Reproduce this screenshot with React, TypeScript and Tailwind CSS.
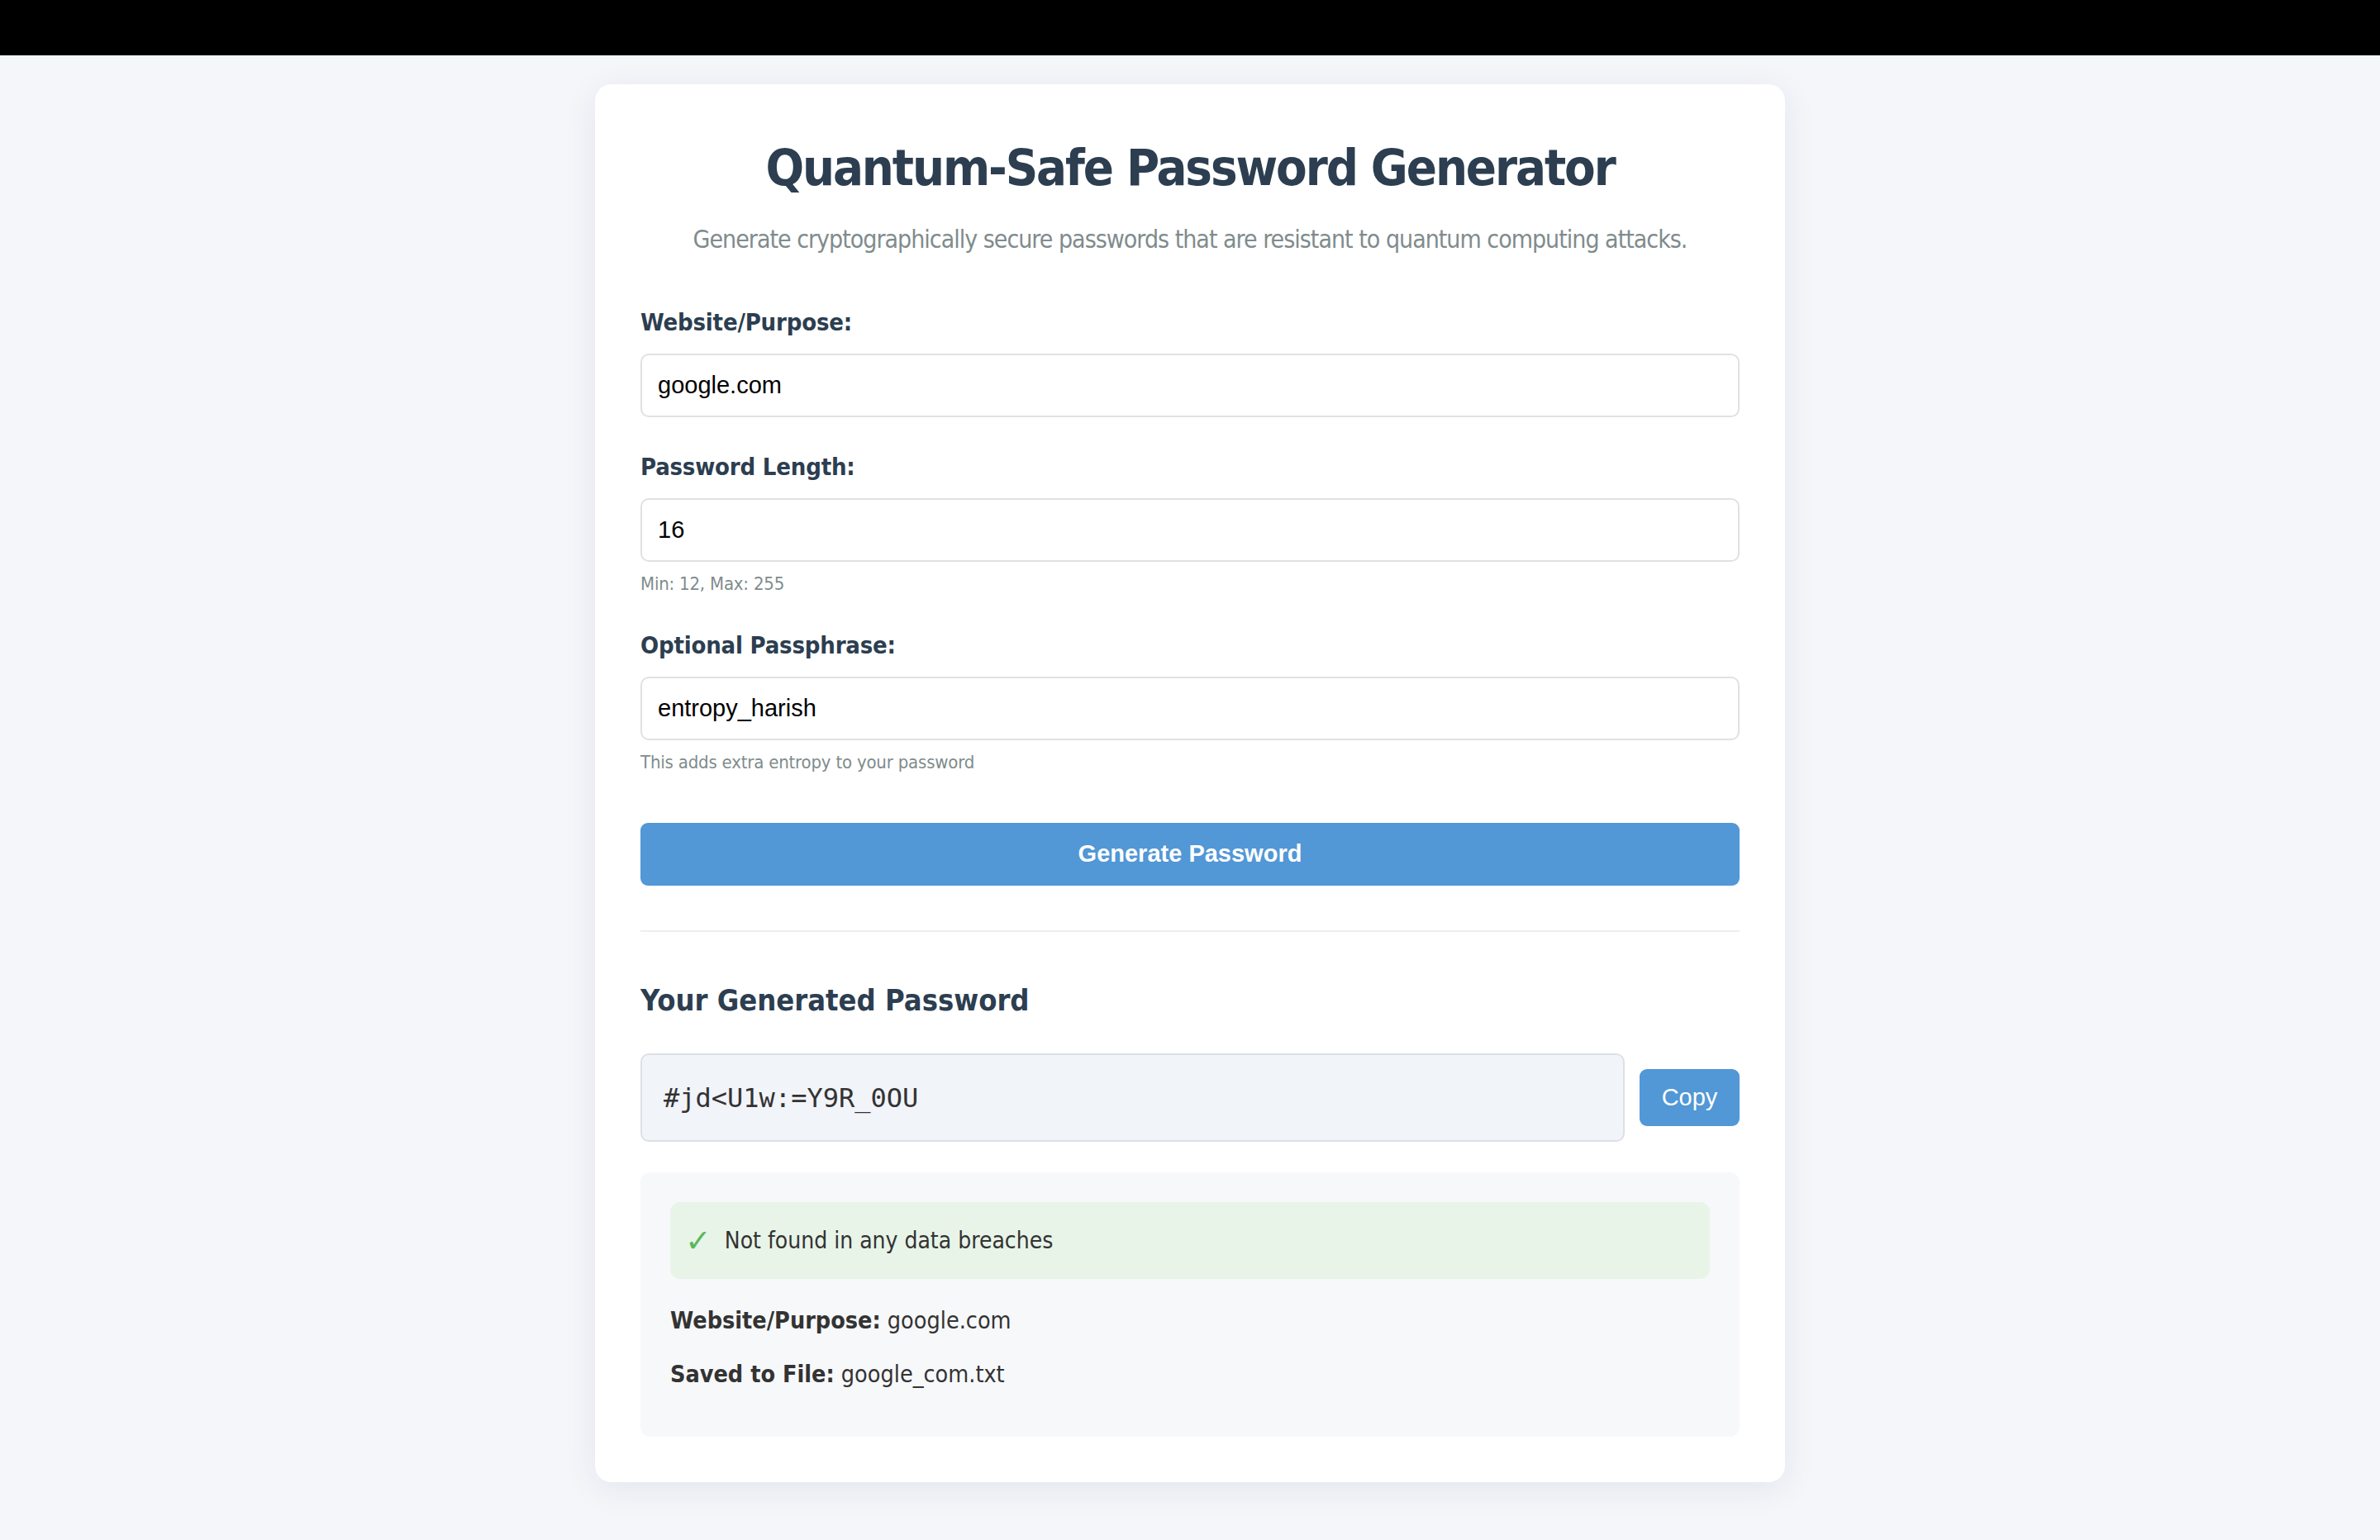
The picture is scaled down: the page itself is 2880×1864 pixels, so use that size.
import { useState } from "react";

const TEXT_FONT = "font-['DejaVu_Sans_Condensed','DejaVu_Sans',sans-serif]";

function Field({
  label,
  value,
  hint,
  className = "",
}: {
  label: string;
  value: string;
  hint?: string;
  className?: string;
}) {
  return (
    <div className={className}>
      <label className="block text-[29px] leading-[36px] font-bold tracking-[-0.2px] text-[#2c3e50]">{label}</label>

      <input
        defaultValue={value}
        className="mt-[20px] block h-[77px] w-full rounded-[10px] border-2 border-[#e1e1e1] bg-white px-[19px] font-['Liberation_Sans',Arial,sans-serif] text-[29px] text-black outline-none"
      />

      {hint && <p className="mt-[13px] text-[22px] leading-[28px] tracking-[-0.2px] text-[#7f8c8d]">{hint}</p>}
    </div>
  );
}

export default function App() {
  const [password] = useState("#jd<U1w:=Y9R_0OU");

  return (
    <div className={`min-h-screen bg-[#f5f6fa] ${TEXT_FONT}`}>
      <div className="h-[67px] bg-black" />

      <main className="flex justify-center pt-[35px] pb-[60px]">
        <div className="w-[1440px] rounded-[20px] bg-white px-[55px] pt-[65px] pb-[55px] shadow-[0_8px_40px_rgba(30,40,80,0.08)]">
          <h1 className="text-center text-[61px] leading-[72px] font-bold tracking-[-2.1px] text-[#2c3e50]">
            Quantum-Safe Password Generator
          </h1>

          <p className="mt-[31px] text-center text-[30px] leading-[40px] tracking-[-1px] text-[#7f8c8d]">
            Generate cryptographically secure passwords that are resistant to quantum computing attacks.
          </p>

          <Field className="mt-[62px]" label="Website/Purpose:" value="google.com" />

          <Field className="mt-[42px]" label="Password Length:" value="16" hint="Min: 12, Max: 255" />

          <Field
            className="mt-[42px]"
            label="Optional Passphrase:"
            value="entropy_harish"
            hint="This adds extra entropy to your password"
          />

          <button className="mt-[59px] block h-[76px] w-full rounded-[9px] bg-[#5297d6] font-['Liberation_Sans',Arial,sans-serif] text-[29px] font-bold text-white">
            Generate Password
          </button>

          <div className="mt-[54px] border-t-2 border-[#eeeeee]" />

          <h2 className="mt-[61px] text-[36px] leading-[44px] font-bold text-[#2c3e50]">Your Generated Password</h2>

          <div className="mt-[42px] flex items-center gap-[18px]">
            <div className="flex h-[107px] flex-1 items-center rounded-[10px] border-2 border-[#dde1e6] bg-[#f1f4f9] px-[26px] font-['DejaVu_Sans_Mono',monospace] text-[32px] text-[#333333]">
              {password}
            </div>

            <button className="h-[69px] w-[121px] rounded-[9px] bg-[#5297d6] font-['Liberation_Sans',Arial,sans-serif] text-[29px] text-white">
              Copy
            </button>
          </div>

          <div className="mt-[37px] rounded-[12px] bg-[#f7f8fa] px-[36px] pt-[36px] pb-[57px] text-[28px] leading-[36px] text-[#333333]">
            <div className="flex h-[93px] items-center gap-[16px] rounded-[12px] bg-[#e8f4e8] px-[18px]">
              <span className="font-['DejaVu_Sans',sans-serif] text-[38px] font-bold text-[#5cb85c]">✓</span>
              <span>Not found in any data breaches</span>
            </div>

            <p className="mt-[33px] text-[28.5px]">
              <span className="font-bold">Website/Purpose:</span> google.com
            </p>

            <p className="mt-[29px] text-[28.5px]">
              <span className="font-bold">Saved to File:</span> google_com.txt
            </p>
          </div>
        </div>
      </main>
    </div>
  );
}
